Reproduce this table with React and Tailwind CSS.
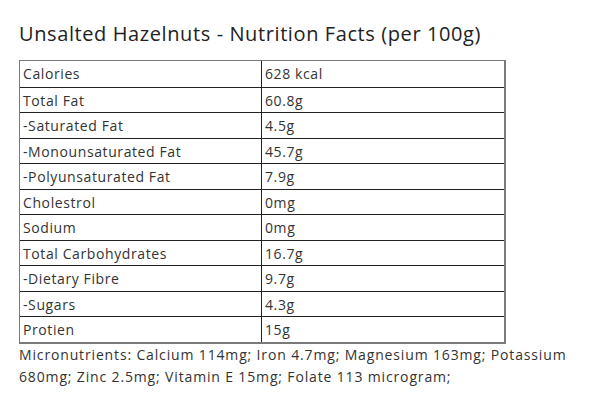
import React from "react";

const rows = [
  ["Calories", "628 kcal"],
  ["Total Fat", "60.8g"],
  ["-Saturated Fat", "4.5g"],
  ["-Monounsaturated Fat", "45.7g"],
  ["-Polyunsaturated Fat", "7.9g"],
  ["Cholestrol", "0mg"],
  ["Sodium", "0mg"],
  ["Total Carbohydrates", "16.7g"],
  ["-Dietary Fibre", "9.7g"],
  ["-Sugars", "4.3g"],
  ["Protien", "15g"],
];

export default function App() {
  return (
    <div className="w-[600px] h-[400px] bg-white text-[#333] overflow-hidden" style={{ fontFamily: "'Open Sans', 'Liberation Sans', sans-serif" }}>
      <div className="pl-[19px] pt-[22px]">
        <h1 className="text-[20px] leading-[24px] text-[#222] tracking-[0.6px]">Unsalted Hazelnuts - Nutrition Facts (per 100g)</h1>
        <div className="mt-[14px] w-[487px] border border-[#7a7a7a] border-r-2 border-b-2">
          {rows.map(([a, b], i) => (
            <div key={a} className={`flex h-[25.5px] ${i > 0 ? "border-t border-[#222]" : ""}`}>
              <div className="w-[242px] border-r border-[#222] pl-[3px] text-[14px] leading-[25px] tracking-[0.6px]">{a}</div>
              <div className="flex-1 pl-[3px] text-[14px] leading-[25px] tracking-[0.6px]">{b}</div>
            </div>
          ))}
        </div>
        <p className="mt-0 w-[575px] text-[14px] leading-[22px] tracking-[0.85px]">
          Micronutrients: Calcium 114mg; Iron 4.7mg; Magnesium 163mg; Potassium 680mg; Zinc 2.5mg; Vitamin E 15mg; Folate 113 microgram;
        </p>
      </div>
    </div>
  );
}
